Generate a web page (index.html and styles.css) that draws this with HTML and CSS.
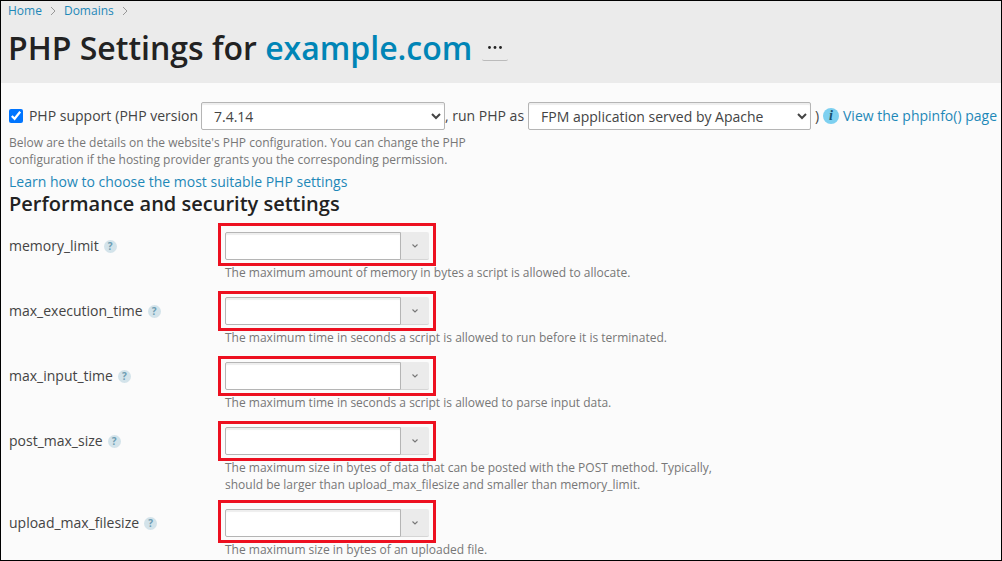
FILE: index.html
```html
<!DOCTYPE html>
<html lang="en">
<head>
    <meta charset="UTF-8">
    <title>PHP Settings for example.com</title>
    <link rel="stylesheet" href="styles.css">
</head>
<body>
    <svg class="sprite" aria-hidden="true">
        <symbol id="crumb" viewBox="0 0 6 10">
            <path d="M1 1l4 4-4 4" fill="none" stroke="#999" stroke-width="1"/>
        </symbol>
        <symbol id="chevron" viewBox="0 0 6 4">
            <path d="M.5 .5l2.500 2.500 2.500-2.500" fill="none" stroke="#777" stroke-width="1.1"/>
        </symbol>
    </svg>

    <header class="page-header">
        <nav class="breadcrumbs">
            <a href="#">Home</a>
            <svg><use href="#crumb"/></svg>
            <a href="#">Domains</a>
            <svg><use href="#crumb"/></svg>
        </nav>
        <div class="title-row">
            <h1>PHP Settings for <a href="#">example.com</a></h1>
            <button class="more" type="button" aria-label="More actions">
                <svg viewBox="0 0 15 3">
                    <circle cx="1.5" cy="1.5" r="1.4"/>
                    <circle cx="7" cy="1.5" r="1.4"/>
                    <circle cx="12.5" cy="1.5" r="1.4"/>
                </svg>
            </button>
        </div>
    </header>

    <main>
        <div class="support">
            <input type="checkbox" id="phpSupport" checked>
            <label class="support-label" for="phpSupport">PHP support</label>
            <label class="version-label" for="phpVersion">(PHP version</label>
            <select class="version" id="phpVersion">
                <option>7.4.14</option>
            </select>
            <label class="handler-label" for="phpHandler">, run PHP as</label>
            <select class="handler" id="phpHandler">
                <option>FPM application served by Apache</option>
            </select>
            <span class="paren">)</span>
            <span class="info">i</span>
            <a href="#">View the phpinfo() page</a>
        </div>
        <p class="hint intro">Below are the details on the website's PHP configuration. You can change the PHP configuration if the hosting provider grants you the corresponding permission.</p>
        <a class="learn" href="#">Learn how to choose the most suitable PHP settings</a>

        <h2>Performance and security settings</h2>

        <div class="row">
            <div class="name"><label for="memoryLimit">memory_limit</label><span class="help">?</span></div>
            <div class="field">
                <div class="combo tall">
                    <input type="text" id="memoryLimit">
                    <button type="button" aria-label="Show values"><svg><use href="#chevron"/></svg></button>
                </div>
                <p class="hint">The maximum amount of memory in bytes a script is allowed to allocate.</p>
            </div>
        </div>
        <div class="row">
            <div class="name"><label for="maxExecutionTime">max_execution_time</label><span class="help">?</span></div>
            <div class="field">
                <div class="combo">
                    <input type="text" id="maxExecutionTime">
                    <button type="button" aria-label="Show values"><svg><use href="#chevron"/></svg></button>
                </div>
                <p class="hint">The maximum time in seconds a script is allowed to run before it is terminated.</p>
            </div>
        </div>
        <div class="row">
            <div class="name"><label for="maxInputTime">max_input_time</label><span class="help">?</span></div>
            <div class="field">
                <div class="combo">
                    <input type="text" id="maxInputTime">
                    <button type="button" aria-label="Show values"><svg><use href="#chevron"/></svg></button>
                </div>
                <p class="hint">The maximum time in seconds a script is allowed to parse input data.</p>
            </div>
        </div>
        <div class="row">
            <div class="name"><label for="postMaxSize">post_max_size</label><span class="help">?</span></div>
            <div class="field">
                <div class="combo">
                    <input type="text" id="postMaxSize">
                    <button type="button" aria-label="Show values"><svg><use href="#chevron"/></svg></button>
                </div>
                <p class="hint">The maximum size in bytes of data that can be posted with the POST method. Typically, should be larger than upload_max_filesize and smaller than memory_limit.</p>
            </div>
        </div>
        <div class="row">
            <div class="name"><label for="uploadMaxFilesize">upload_max_filesize</label><span class="help">?</span></div>
            <div class="field">
                <div class="combo tall">
                    <input type="text" id="uploadMaxFilesize">
                    <button type="button" aria-label="Show values"><svg><use href="#chevron"/></svg></button>
                </div>
                <p class="hint">The maximum size in bytes of an uploaded file.</p>
            </div>
        </div>
    </main>
</body>
</html>
```
FILE: styles.css
```css
* {
    box-sizing: border-box;
}

body {
    margin: 0;
    min-height: 100vh;
    border: 1px solid #000;
    background-color: #fbfbfb;
    color: #444;
    font-family: 'Open Sans', sans-serif;
    font-size: 14px;
    line-height: 20px;
}

a {
    color: #1e88b8;
    text-decoration: none;
}

h1, h2, p {
    margin: 0;
}

.sprite {
    display: none;
}

.page-header {
    background-color: #ebebeb;
    padding: 0 7px 14px;
}

.breadcrumbs {
    display: flex;
    align-items: center;
    gap: 8px;
    font-size: 12px;
}

.breadcrumbs svg {
    width: 6px;
    height: 10px;
}

.title-row {
    display: flex;
    align-items: center;
    gap: 10px;
    padding-top: 6px;
}

h1 {
    color: #222;
    font-size: 32px;
    font-weight: 600;
    line-height: 42px;
}

h1 a {
    color: #0085b6;
}

.more {
    display: flex;
    align-items: center;
    justify-content: center;
    width: 26px;
    height: 26px;
    padding: 0;
    border: 0;
    border-bottom: 1px solid #bbb;
    border-radius: 2px;
    background: none;
}

.more svg {
    width: 15px;
    height: 3px;
    fill: #222;
}

main {
    padding: 19px 4px 1px 8px;
}

.support {
    display: flex;
    align-items: center;
    white-space: nowrap;
}

.support input {
    width: 14px;
    height: 14px;
    margin: 0 6px 0 0;
}

.support-label,
.handler-label,
.paren {
    margin-right: 4px;
}

.version-label {
    margin-right: 3px;
}

select {
    height: 28px;
    padding: 0 0 0 8px;
    border: 1px solid #b5b5b5;
    border-radius: 2px;
    background-color: #fff;
    box-shadow: inset 0 2px 1px #eee;
    color: #444;
    font: inherit;
}

.version {
    width: 245px;
}

.handler {
    width: 284px;
    margin-right: 4px;
}

.info {
    width: 16px;
    height: 16px;
    margin-right: 4px;
    border-radius: 50%;
    background-color: #7dd0f0;
    color: #17506e;
    font: italic bold 14px/16px 'Liberation Serif', serif;
    text-align: center;
}

.hint {
    color: #777;
    font-size: 12px;
    line-height: 17px;
}

.intro {
    max-width: 490px;
    padding-top: 4px;
}

.learn {
    display: block;
    margin-top: 4px;
}

h2 {
    color: #222;
    font-size: 20px;
    font-weight: 600;
    line-height: 24px;
}

.row {
    display: flex;
    margin-top: 16px;
}

.name {
    display: flex;
    align-items: center;
    gap: 5px;
    width: 216px;
    height: 28px;
}

.help {
    width: 13px;
    height: 13px;
    border-radius: 50%;
    background-color: #d3e3ea;
    color: #6d9db3;
    font-size: 10px;
    font-weight: 700;
    line-height: 13px;
    text-align: center;
}

.field {
    max-width: 500px;
}

.combo {
    position: relative;
    display: flex;
    width: 204px;
    height: 28px;
    margin-bottom: 4px;
}

.combo input {
    flex: 1;
    min-width: 0;
    padding: 0 8px;
    border: 1px solid #b5b5b5;
    border-radius: 2px 0 0 2px;
    background-color: #fff;
    box-shadow: inset 0 2px 1px #eee;
    font: inherit;
}

.combo button {
    display: flex;
    align-items: center;
    justify-content: center;
    width: 28px;
    padding: 0;
    border: 0;
    border-bottom: 1px solid #d5d5d5;
    border-radius: 0 2px 2px 0;
    background-color: #ebebeb;
}

.combo button svg {
    width: 6px;
    height: 4px;
}

/* red frame around the editable values */
.combo::after {
    content: '';
    position: absolute;
    inset: -6px -7px -6px -7px;
    border: 3px solid #ed1020;
    pointer-events: none;
}

.combo.tall::after {
    top: -9px;
}
```
